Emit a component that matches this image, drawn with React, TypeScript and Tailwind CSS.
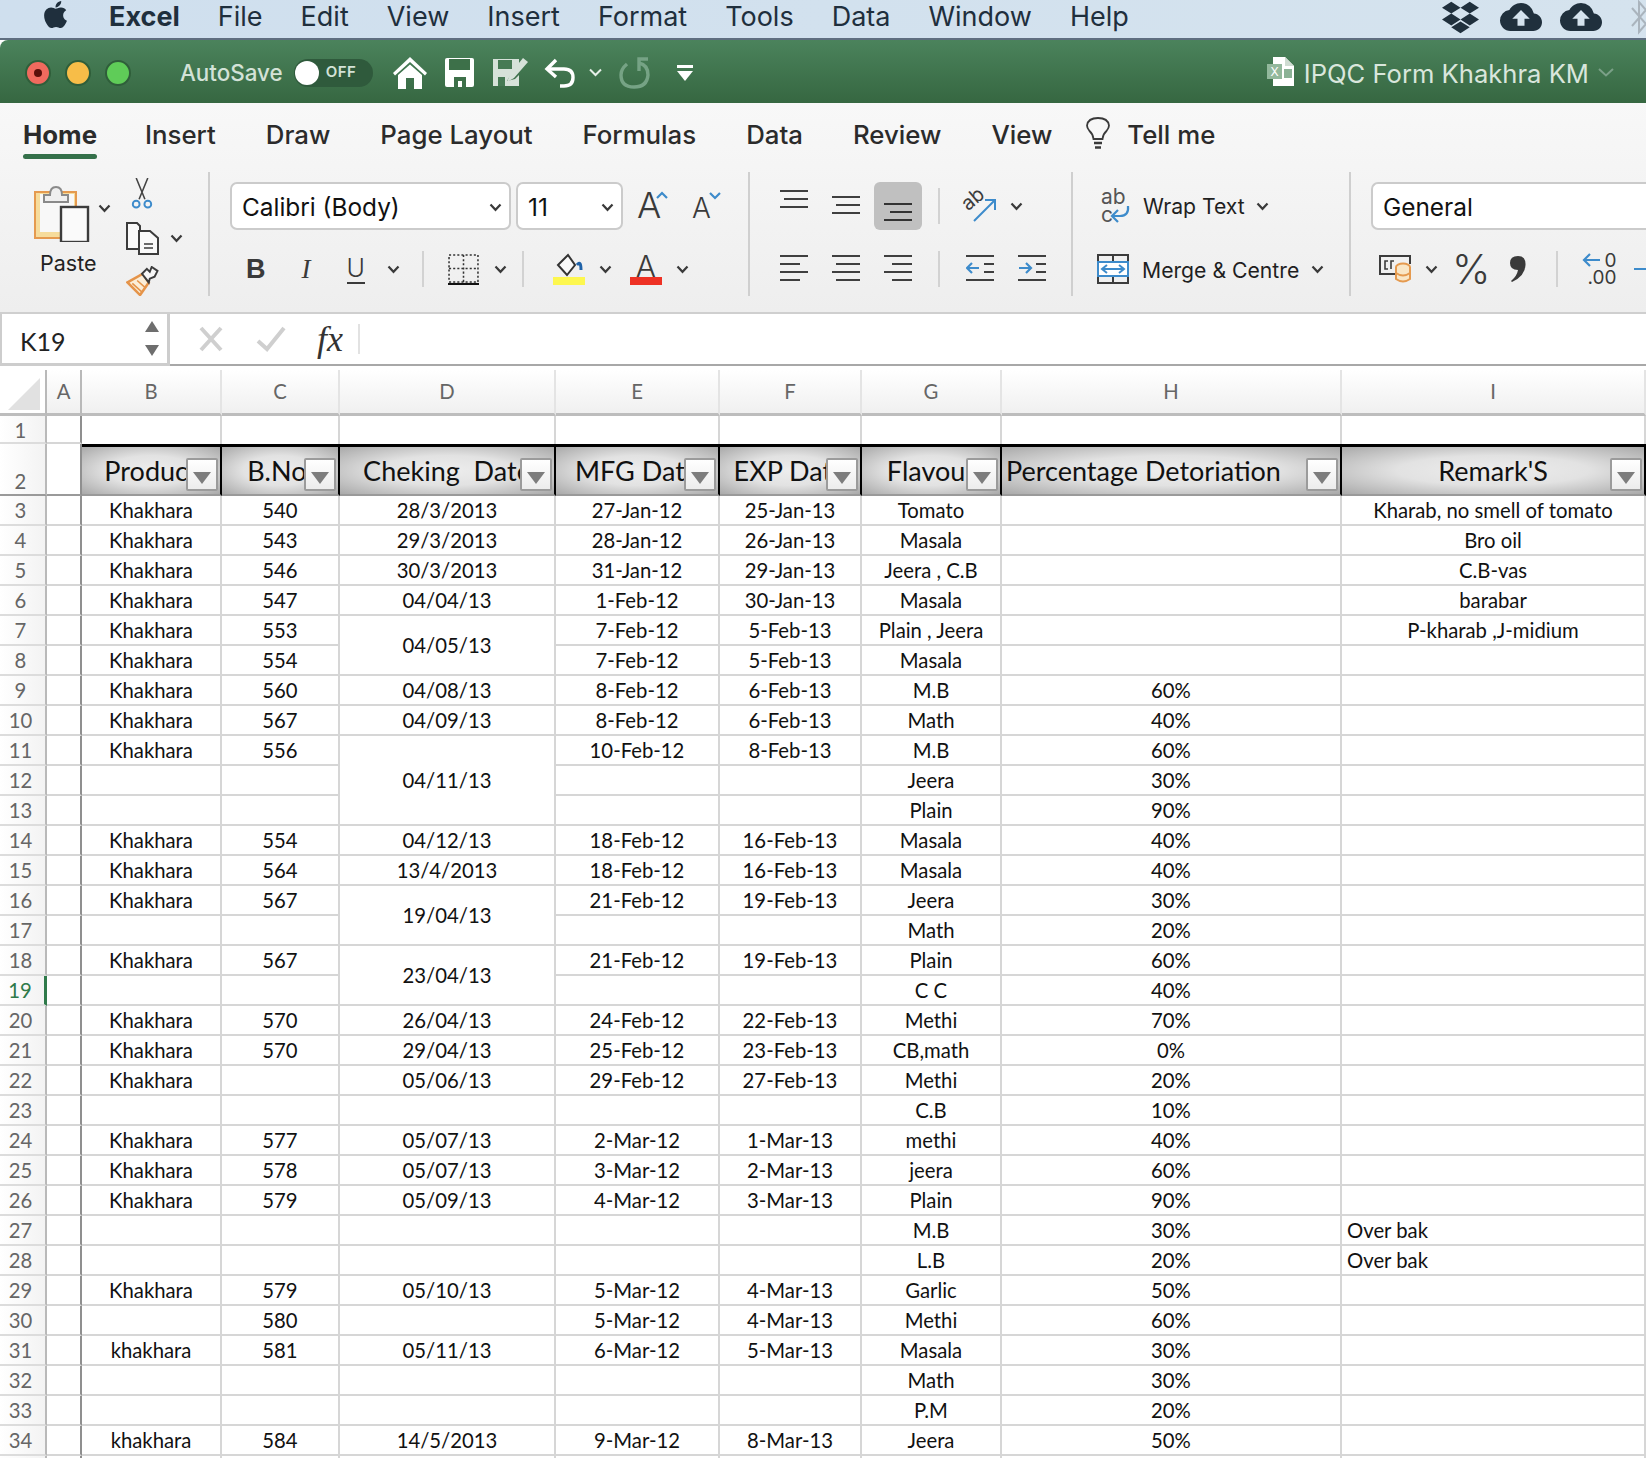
import { FaApple, FaDropbox } from "react-icons/fa";
import { MdCloudUpload } from "react-icons/md";

type Row = [number, string, string, string | null, string, string, string, string, string];

const rows: Row[] = [
  [3, "Khakhara", "540", "28/3/2013", "27-Jan-12", "25-Jan-13", "Tomato", "", "Kharab, no smell of tomato"],
  [4, "Khakhara", "543", "29/3/2013", "28-Jan-12", "26-Jan-13", "Masala", "", "Bro oil"],
  [5, "Khakhara", "546", "30/3/2013", "31-Jan-12", "29-Jan-13", "Jeera , C.B", "", "C.B-vas"],
  [6, "Khakhara", "547", "04/04/13", "1-Feb-12", "30-Jan-13", "Masala", "", "barabar"],
  [7, "Khakhara", "553", "04/05/13", "7-Feb-12", "5-Feb-13", "Plain , Jeera", "", "P-kharab ,J-midium"],
  [8, "Khakhara", "554", null, "7-Feb-12", "5-Feb-13", "Masala", "", ""],
  [9, "Khakhara", "560", "04/08/13", "8-Feb-12", "6-Feb-13", "M.B", "60%", ""],
  [10, "Khakhara", "567", "04/09/13", "8-Feb-12", "6-Feb-13", "Math", "40%", ""],
  [11, "Khakhara", "556", "04/11/13", "10-Feb-12", "8-Feb-13", "M.B", "60%", ""],
  [12, "", "", null, "", "", "Jeera", "30%", ""],
  [13, "", "", null, "", "", "Plain", "90%", ""],
  [14, "Khakhara", "554", "04/12/13", "18-Feb-12", "16-Feb-13", "Masala", "40%", ""],
  [15, "Khakhara", "564", "13/4/2013", "18-Feb-12", "16-Feb-13", "Masala", "40%", ""],
  [16, "Khakhara", "567", "19/04/13", "21-Feb-12", "19-Feb-13", "Jeera", "30%", ""],
  [17, "", "", null, "", "", "Math", "20%", ""],
  [18, "Khakhara", "567", "23/04/13", "21-Feb-12", "19-Feb-13", "Plain", "60%", ""],
  [19, "", "", null, "", "", "C C", "40%", ""],
  [20, "Khakhara", "570", "26/04/13", "24-Feb-12", "22-Feb-13", "Methi", "70%", ""],
  [21, "Khakhara", "570", "29/04/13", "25-Feb-12", "23-Feb-13", "CB,math", "0%", ""],
  [22, "Khakhara", "", "05/06/13", "29-Feb-12", "27-Feb-13", "Methi", "20%", ""],
  [23, "", "", "", "", "", "C.B", "10%", ""],
  [24, "Khakhara", "577", "05/07/13", "2-Mar-12", "1-Mar-13", "methi", "40%", ""],
  [25, "Khakhara", "578", "05/07/13", "3-Mar-12", "2-Mar-13", "jeera", "60%", ""],
  [26, "Khakhara", "579", "05/09/13", "4-Mar-12", "3-Mar-13", "Plain", "90%", ""],
  [27, "", "", "", "", "", "M.B", "30%", "Over bak"],
  [28, "", "", "", "", "", "L.B", "20%", "Over bak"],
  [29, "Khakhara", "579", "05/10/13", "5-Mar-12", "4-Mar-13", "Garlic", "50%", ""],
  [30, "", "580", "", "5-Mar-12", "4-Mar-13", "Methi", "60%", ""],
  [31, "khakhara", "581", "05/11/13", "6-Mar-12", "5-Mar-13", "Masala", "30%", ""],
  [32, "", "", "", "", "", "Math", "30%", ""],
  [33, "", "", "", "", "", "P.M", "20%", ""],
  [34, "khakhara", "584", "14/5/2013", "9-Mar-12", "8-Mar-13", "Jeera", "50%", ""],
];

const dateSpans: Record<number, number> = { 7: 2, 11: 3, 16: 2, 18: 2 };
const menus = ["File", "Edit", "View", "Insert", "Format", "Tools", "Data", "Window", "Help"];
const tabs = ["Insert", "Draw", "Page Layout", "Formulas", "Data", "Review", "View"];
const letters = ["B", "C", "D", "E", "F", "G", "H", "I"];
const headers = [
  { label: "Product" },
  { label: "B.No." },
  { label: "Cheking  Date" },
  { label: "MFG Date" },
  { label: "EXP Date" },
  { label: "Flavour" },
  { label: "Percentage Detoriation", left: true },
  { label: "Remark'S" },
];

function Chev({ className = "" }: { className?: string }) {
  return (
    <svg className={`shrink-0 ${className}`} width="13" height="9" viewBox="0 0 13 9" fill="none" stroke="#3a3a3a" strokeWidth="2.2">
      <path d="M1.5 1.5 6.5 6.8 11.5 1.5" />
    </svg>
  );
}

function Lines({ rows: ys, active = false }: { rows: [number, number][]; active?: boolean }) {
  return (
    <svg width="28" height="30" viewBox="0 0 28 30" stroke={active ? "#333" : "#3f3f3f"} strokeWidth="2" className="shrink-0">
      {ys.map(([y, x], i) => (
        <path key={i} d={`M${x < 0 ? 0 : x} ${y}H${x < 0 ? 28 + x : 28}`} />
      ))}
    </svg>
  );
}

function Divider({ className = "" }: { className?: string }) {
  return <div className={`h-9 w-0.5 shrink-0 bg-[#d2d2d2] ${className}`} />;
}

function FilterButton() {
  return (
    <div className="absolute right-[2px] bottom-[3px] flex h-[33px] w-[32px] items-center justify-center rounded-[2px] border-2 border-[#9b9b9b] bg-gradient-to-b from-white to-[#ececec]">
      <svg width="18" height="12" viewBox="0 0 18 12" className="mt-[6px]">
        <path d="M0 0H18L9 12Z" fill="#7d7d7d" />
      </svg>
    </div>
  );
}

function MenuBar() {
  return (
    <div className="flex h-[38px] items-center overflow-hidden bg-gradient-to-r from-[#cfdfee] to-[#d5e3ee] pb-[4px] font-['Inter',sans-serif] text-[27px] text-[#1f2f3d]">
      <FaApple className="ml-[40px] mb-[6px] shrink-0 text-[#1f2f3d]" size={31} />
      <span className="ml-[38px] font-bold">Excel</span>
      <div className="ml-[38px] flex gap-[38px]">
        {menus.map((m) => (
          <span key={m}>{m}</span>
        ))}
      </div>
      <div className="ml-auto flex items-center">
        <FaDropbox className="mr-[21px] text-[#20303d]" size={37} />
        <MdCloudUpload className="mr-[18px] text-[#20303d]" size={42} />
        <MdCloudUpload className="mr-[28px] text-[#20303d]" size={42} />
        <svg width="18" height="36" viewBox="0 0 18 36" fill="none" stroke="#aab4bd" strokeWidth="2" className="mr-[-2px] shrink-0">
          <path d="M2 9 16 25 9 33V3L16 11 2 27" />
        </svg>
      </div>
    </div>
  );
}

function TitleBar() {
  return (
    <div className="flex h-[63px] items-center rounded-tl-[8px] bg-gradient-to-b from-[#4b835c] to-[#366741] pt-[2px] font-['Inter',sans-serif]">
      <div className="ml-[25px] flex gap-[14px]">
        <div className="flex h-[26px] w-[26px] items-center justify-center rounded-full border-2 border-[#2f5e3a] bg-[#f06a5e]">
          <div className="h-[8px] w-[8px] rounded-full bg-[#5a0f0a]" />
        </div>
        <div className="h-[26px] w-[26px] rounded-full border-2 border-[#2f5e3a] bg-[#f7bd48]" />
        <div className="h-[26px] w-[26px] rounded-full border-2 border-[#2f5e3a] bg-[#5fcc58]" />
      </div>
      <span className="ml-[49px] text-[22.4px] font-medium text-[#d3e2d7]">AutoSave</span>
      <div className="ml-[11px] flex h-[28px] w-[79px] items-center rounded-full bg-[#2f5a3c] pl-[1px]">
        <div className="h-[24px] w-[24px] rounded-full bg-white" />
        <span className="ml-[7px] text-[15px] font-semibold tracking-[0.5px] text-[#d3e2d7]">OFF</span>
      </div>
      <svg className="ml-[20px] shrink-0" width="34" height="32" viewBox="0 0 34 32" fill="#fff">
        <path d="M17 0 34 16 32 18.500 17 5 2 18.500 0 16Z" />
        <path d="M5 18 17 7.500 29 18V32H21V21H13V32H5Z" />
      </svg>
      <svg className="ml-[18px] shrink-0" width="29" height="29" viewBox="0 0 29 29">
        <path d="M2 0H27Q29 0 29 2V27Q29 29 27 29H2Q0 29 0 27V2Q0 0 2 0Z" fill="#fff" />
        <rect x="4" y="1" width="21" height="11" fill="#3d7049" />
        <path d="M9 29V19H21V29H17V23H13V29Z" fill="#3d7049" />
      </svg>
      <svg className="ml-[17px] shrink-0" width="38" height="31" viewBox="0 0 38 31">
        <path d="M2 2H28V8L20 17 16 24 24 22 28 18V29H2Z" fill="#d6e2d9" />
        <rect x="7" y="3" width="14" height="9" fill="#467a54" />
        <path d="M32 1 37 5 23 21 16 25 19 17Z" fill="#d6e2d9" />
        <path d="M7 20H14V29H7Z" fill="#467a54" />
      </svg>
      <svg className="ml-[15px] shrink-0" width="32" height="30" viewBox="0 0 32 30" fill="none" stroke="#fff" strokeWidth="3.4">
        <path d="M12 2 3 11 12 19" />
        <path d="M3 11H20Q29 11 29 19.500T20 28H16" />
      </svg>
      <svg className="ml-[13px] shrink-0" width="13" height="9" viewBox="0 0 13 9" fill="none" stroke="#e5efe8" strokeWidth="2">
        <path d="M1 1.500 6.500 7 12 1.500" />
      </svg>
      <svg className="ml-[17px] shrink-0" width="31" height="32" viewBox="0 0 31 32" fill="none" stroke="#76a385" strokeWidth="3.4">
        <path d="M8 7Q2 12 2 18 2 30 15 30T29 18Q29 8 20 6" />
        <path d="M20 14V2L29 2" />
      </svg>
      <svg className="ml-[27px] shrink-0" width="16" height="16" viewBox="0 0 16 16" fill="#fff">
        <rect y="0" width="16" height="3" />
        <path d="M0 6H16L8 16Z" />
      </svg>
      <div className="ml-auto flex items-center">
        <svg className="mr-[9px] shrink-0" width="28" height="30" viewBox="0 0 28 30">
          <path d="M6 0H18L27 9V29H6Z" fill="#fff" />
          <path d="M18 0V9H27Z" fill="#cfdcd2" />
          <rect x="0" y="7" width="15" height="15" fill="#92b89c" />
          <rect x="17" y="12" width="8" height="9" fill="#8bb296" />
          <text x="3.500" y="19" fontSize="12" fill="#fff" fontFamily="Inter">X</text>
        </svg>
        <span className="pt-[3px] text-[25.6px] text-[#d9e6dc]">IPQC Form Khakhra KM</span>
        <svg className="ml-[9px] mr-[32px] shrink-0" width="16" height="9" viewBox="0 0 16 9" fill="none" stroke="#7ba088" strokeWidth="2">
          <path d="M1 1 8 7.500 15 1" />
        </svg>
      </div>
    </div>
  );
}

function Tabs() {
  return (
    <div className="flex h-[57px] items-start pl-[23px] pt-[15px] font-['Inter',sans-serif] text-[25.8px] font-medium leading-[34px] text-[#2b2b2b]">
      <div className="relative font-bold">
        Home
        <div className="absolute left-0 right-0 top-[36px] h-[5px] rounded-full bg-[#34704a]" />
      </div>
      <div className="ml-[48px] flex gap-[50px]">
        {tabs.map((t) => (
          <span key={t}>{t}</span>
        ))}
      </div>
      <svg className="ml-[34px] -mt-[1px] shrink-0" width="24" height="33" viewBox="0 0 24 33" fill="none" stroke="#3a3a3a" strokeWidth="1.8">
        <path d="M7.500 22Q7 17 3.500 14 1 11 1 8.500 2 1 12 1T23 8.500Q23 11 20.500 14 17 17 16.500 22Z" />
        <path d="M8 26H16M9 30.500H15" strokeWidth="2.400" />
      </svg>
      <span className="ml-[17px]">Tell me</span>
    </div>
  );
}

function ClipboardGroup() {
  return (
    <div className="flex h-[124px] w-[210px] shrink-0 border-r-2 border-[#cfcfcf]">
      <div className="ml-[34px] flex w-[64px] flex-col items-start pt-[10px]">
        <svg width="56" height="60" viewBox="0 0 56 60" className="shrink-0">
          <rect x="1" y="10" width="41" height="46" fill="#f6dc9c" stroke="#e59a4f" strokeWidth="2" />
          <rect x="6" y="12" width="34" height="38" fill="#f8f8f8" />
          <path d="M10 20V13H16Q16 5 22 5T28 13H34V20Z" fill="#efefef" stroke="#8a8a8a" strokeWidth="2" />
          <rect x="27" y="25" width="27" height="35" fill="#fafafa" stroke="#3c3c3c" strokeWidth="2.400" />
        </svg>
        <span className="ml-[6px] mt-[9px] font-['Inter',sans-serif] text-[21.5px] leading-[24px] text-[#222]">Paste</span>
      </div>
      <Chev className="ml-[0px] mt-[32px]" />
      <div className="ml-[15px] flex flex-col pt-[6px]">
        <svg width="22" height="33" viewBox="0 0 22 33" fill="none" stroke="#444" strokeWidth="1.600" className="ml-[5px]">
          <path d="M5 0 14 22M17 0 8 22" />
          <circle cx="5" cy="27" r="3.500" stroke="#3d8bcb" strokeWidth="2" />
          <circle cx="17" cy="27" r="3.500" stroke="#3d8bcb" strokeWidth="2" />
        </svg>
        <div className="mt-[12px] flex items-center">
          <svg width="33" height="33" viewBox="0 0 33 33" fill="#fafafa" stroke="#3c3c3c" strokeWidth="2">
            <path d="M14 27H1V1H11L14 4V9" />
            <path d="M13 9H24L32 16V32H13Z" />
            <path d="M18 22H27M18 26H27" strokeWidth="1.500" />
          </svg>
          <Chev className="ml-[11px]" />
        </div>
        <svg width="33" height="31" viewBox="0 0 33 31" className="mt-[11px]">
          <path d="M1 17 17 8 23 17 14 30Z" fill="#fbeed8" stroke="#e5944a" strokeWidth="2.600" />
          <path d="M6 18 16 27M11 15 19 22" stroke="#e5944a" strokeWidth="1.600" />
          <path d="M16 8 21 3 24 6 26 1 32 5 29 11 24 13 23 17Z" fill="#f7f7f7" stroke="#3c3c3c" strokeWidth="2" />
        </svg>
      </div>
    </div>
  );
}

function FontGroup() {
  return (
    <div className="flex h-[124px] w-[540px] shrink-0 flex-col border-r-2 border-[#cfcfcf] pt-[10px] font-['Inter',sans-serif]">
      <div className="ml-[20px] flex h-[48px] items-center">
        <div className="flex h-[48px] w-[281px] items-center justify-between rounded-[7px] border-2 border-[#cbcbcb] bg-white pl-[10px] pr-[7px] pt-[3px] text-[24.4px] text-[#111]">
          Calibri (Body)
          <Chev />
        </div>
        <div className="ml-[5px] flex h-[48px] w-[107px] items-center justify-between rounded-[7px] border-2 border-[#cbcbcb] bg-white pl-[10px] pr-[7px] pt-[3px] text-[24.4px] text-[#111]">
          11
          <Chev />
        </div>
        <svg width="32" height="46" viewBox="0 0 32 46" className="ml-[14px] shrink-0">
          <text x="0" y="35" fontSize="36" fontFamily="Inter" fontWeight="300" fill="#3a3a3a">A</text>
          <path d="M20 15 25 10 30 15" fill="none" stroke="#3d8bcb" strokeWidth="2.200" />
        </svg>
        <svg width="30" height="46" viewBox="0 0 30 46" className="ml-[23px] shrink-0">
          <text x="0" y="35" fontSize="28" fontFamily="Inter" fontWeight="300" fill="#3a3a3a">A</text>
          <path d="M18 10 23 15 28 10" fill="none" stroke="#3d8bcb" strokeWidth="2.200" />
        </svg>
      </div>
      <div className="mt-[19px] flex h-[40px] items-center text-[#3a3a3a]">
        <span className="ml-[36px] font-['Liberation_Sans',sans-serif] text-[27px] font-bold">B</span>
        <span className="ml-[36px] font-['Liberation_Serif',serif] text-[27px] italic">I</span>
        <span className="ml-[36px] border-b-2 border-[#3a3a3a] text-[25px] font-light leading-[28px]">U</span>
        <Chev className="ml-[22px]" />
        <Divider className="ml-[22px]" />
        <svg width="31" height="31" viewBox="0 0 30 30" fill="none" stroke="#333" strokeWidth="1.500" strokeDasharray="2 2" className="ml-[24px] shrink-0">
          <rect x="1" y="1" width="28" height="26" />
          <path d="M15 1V27M1 14H29" />
          <path d="M0 29H30" stroke="#111" strokeWidth="2" strokeDasharray="none" />
        </svg>
        <Chev className="ml-[15px]" />
        <Divider className="ml-[15px]" />
        <div className="ml-[29px] flex w-[32px] shrink-0 flex-col">
          <svg width="32" height="24" viewBox="0 0 32 24" fill="none">
            <path d="M5 12 15 2 22 12 14 22Z" fill="#fafafa" stroke="#333" strokeWidth="2" />
            <path d="M24 12Q28 7 28 17" stroke="#1f62a8" strokeWidth="3" />
          </svg>
          <div className="h-[8px] w-[32px] bg-[#fdf74f]" />
        </div>
        <Chev className="ml-[14px]" />
        <div className="ml-[18px] flex w-[32px] shrink-0 flex-col items-center">
          <span className="h-[24px] text-[30px] font-light leading-[26px]">A</span>
          <div className="h-[8px] w-[32px] bg-[#ee3124]" />
        </div>
        <Chev className="ml-[14px]" />
      </div>
    </div>
  );
}

function AlignGroup() {
  return (
    <div className="flex h-[124px] w-[323px] shrink-0 flex-col border-r-2 border-[#cfcfcf] pt-[10px]">
      <div className="flex h-[48px] items-center">
        <div className="ml-[30px] mb-[16px]">
          <Lines rows={[[8, 0], [16, 4], [24, 0]]} />
        </div>
        <div className="ml-[24px] mb-[4px]">
          <Lines rows={[[8, 0], [16, 4], [24, 0]]} />
        </div>
        <div className="ml-[14px] flex h-[48px] w-[48px] items-start justify-center rounded-[6px] bg-[#c0c0c0] pt-[14px]">
          <Lines active rows={[[8, 0], [16, 6], [24, 0]]} />
        </div>
        <Divider className="ml-[16px]" />
        <svg width="56" height="56" viewBox="-11 -12 56 56" className="my-[-4px] ml-[12px] mr-[-11px] shrink-0">
          <text x="0" y="16" fontSize="20" fontFamily="Inter" fill="#3c3c3c" transform="rotate(-40 10 12)">ab</text>
          <path d="M11 31 31 11M22 10H32V20" fill="none" stroke="#3d8bcb" strokeWidth="2" />
        </svg>
        <Chev className="ml-[13px]" />
      </div>
      <div className="mt-[19px] flex h-[40px] items-center">
        <div className="ml-[30px]">
          <Lines rows={[[2, 0], [10, -8], [18, 0], [26, -8]]} />
        </div>
        <div className="ml-[24px]">
          <Lines rows={[[2, 0], [10, 4], [18, 0], [26, 4]]} />
        </div>
        <div className="ml-[24px]">
          <Lines rows={[[2, 0], [10, 8], [18, 0], [26, 8]]} />
        </div>
        <Divider className="ml-[26px]" />
        <svg width="28" height="30" viewBox="0 0 28 30" fill="none" className="ml-[26px] shrink-0">
          <path d="M0 2H28M18 10H28M18 18H28M0 26H28" stroke="#3f3f3f" strokeWidth="2" />
          <path d="M1 14H13M6 9 1 14 6 19" stroke="#3d8bcb" strokeWidth="2.200" />
        </svg>
        <svg width="28" height="30" viewBox="0 0 28 30" fill="none" className="ml-[24px] shrink-0">
          <path d="M0 2H28M18 10H28M18 18H28M0 26H28" stroke="#3f3f3f" strokeWidth="2" />
          <path d="M1 14H13M8 9 13 14 8 19" stroke="#3d8bcb" strokeWidth="2.200" />
        </svg>
      </div>
    </div>
  );
}

function WrapGroup() {
  return (
    <div className="flex h-[124px] w-[278px] shrink-0 flex-col border-r-2 border-[#cfcfcf] pt-[10px] font-['Inter',sans-serif] text-[21.2px] text-[#1f1f1f]">
      <div className="flex h-[48px] items-center">
        <svg width="30" height="46" viewBox="0 -6 30 46" className="ml-[28px] shrink-0">
          <text x="0" y="15" fontSize="21" fontFamily="Inter" fill="#555">ab</text>
          <text x="0" y="33" fontSize="21" fontFamily="Inter" fill="#555">c</text>
          <path d="M27 17Q28 27 19 27H12M17 21 11 27 17 33" fill="none" stroke="#3d8bcb" strokeWidth="2.200" />
        </svg>
        <span className="ml-[12px] pt-[2px]">Wrap Text</span>
        <Chev className="ml-[11px]" />
      </div>
      <div className="mt-[19px] flex h-[40px] items-center">
        <svg width="32" height="30" viewBox="0 0 32 30" fill="none" className="ml-[24px] shrink-0">
          <rect x="1" y="1" width="30" height="28" stroke="#3c3c3c" strokeWidth="2" />
          <path d="M16 1V8M16 22V29" stroke="#3c3c3c" strokeWidth="2" />
          <rect x="1" y="8" width="30" height="14" stroke="#3d8bcb" strokeWidth="2" fill="#fff" />
          <path d="M5 15H27M10 11 5 15 10 19M22 11 27 15 22 19" stroke="#3d8bcb" strokeWidth="2" />
        </svg>
        <span className="ml-[13px] pt-[3px]">Merge &amp; Centre</span>
        <Chev className="ml-[12px]" />
      </div>
    </div>
  );
}

function NumberGroup() {
  return (
    <div className="flex h-[124px] flex-1 flex-col overflow-hidden pt-[10px] font-['Inter',sans-serif] text-[#3a3a3a]">
      <div className="ml-[20px] flex h-[48px] w-[300px] items-center rounded-l-[7px] border-2 border-r-0 border-[#cbcbcb] bg-white pl-[10px] pt-[3px] text-[24.4px] text-[#111]">
        General
      </div>
      <div className="mt-[19px] flex h-[40px] items-center">
        <svg width="33" height="28" viewBox="0 0 33 28" fill="none" className="ml-[28px] shrink-0">
          <path d="M16 19H1V1H31V9" stroke="#3c3c3c" strokeWidth="2" />
          <path d="M9 6H6V14H9M15 6H12V14" stroke="#3c3c3c" strokeWidth="1.600" />
          <ellipse cx="24" cy="12" rx="7" ry="3.500" fill="#f9e6c6" stroke="#e59a4f" strokeWidth="2" />
          <path d="M17 12V24Q24 29 31 24V12M17 18Q24 23 31 18" fill="#f9e6c6" stroke="#e59a4f" strokeWidth="2" />
        </svg>
        <Chev className="ml-[13px]" />
        <span className="ml-[14px] text-[41px] font-light leading-none">%</span>
        <svg width="16" height="28" viewBox="0 0 16 28" className="ml-[20px] shrink-0">
          <path d="M8 1Q16 1 15.500 10 15 21 2 27L1 26Q7 21 8 15 0 15 0 8 0 1 8 1Z" fill="#3a3a3a" />
        </svg>
        <Divider className="ml-[30px]" />
        <div className="relative ml-[24px] h-[34px] w-[34px] shrink-0 text-[19px] leading-[17px]">
          <svg width="20" height="16" viewBox="0 0 20 16" fill="none" stroke="#3d8bcb" strokeWidth="2.200" className="absolute left-0 top-0">
            <path d="M18 8H2M8 2 2 8 8 14" />
          </svg>
          <span className="absolute right-0 top-0">0</span>
          <span className="absolute right-0 top-[17px]">.00</span>
        </div>
        <div className="ml-[18px] h-[2px] w-[12px] shrink-0 bg-[#3d8bcb]" />
      </div>
    </div>
  );
}

function FormulaBar() {
  return (
    <div className="flex h-[58px] border-t-2 border-[#cfcfcf] bg-white">
      <div className="flex h-[52px] w-[170px] shrink-0 items-center justify-between border-r-[3px] border-b-[3px] border-l-2 border-[#cdcdcd] pl-[18px] pr-[7px] pt-[6px] font-['Lato',sans-serif] text-[25px] text-[#222]">
        K19
        <svg width="16" height="36" viewBox="0 0 16 36" fill="#6e6e6e" className="-mt-[6px]">
          <path d="M8 0 15 11H1Z" />
          <path d="M1 24H15L8 35Z" />
        </svg>
      </div>
      <div className="flex h-[52px] flex-1 items-center border-b-2 border-[#a8a8a8]">
        <svg width="24" height="26" viewBox="0 0 24 26" fill="none" stroke="#cfcfcf" strokeWidth="4" className="ml-[29px]">
          <path d="M2 2 22 24M22 2 2 24" />
        </svg>
        <svg width="30" height="26" viewBox="0 0 30 26" fill="none" stroke="#cfcfcf" strokeWidth="4" className="ml-[33px]">
          <path d="M2 15 11 23 28 2" />
        </svg>
        <span className="ml-[31px] font-['Liberation_Serif',serif] text-[36px] italic leading-none text-[#333]">fx</span>
        <div className="ml-[15px] h-[30px] w-0.5 bg-[#e2e2e2]" />
      </div>
    </div>
  );
}

function Sheet() {
  const cell = "border-r-2 border-b-2 border-[#d6d6d6] p-0 text-center align-middle";
  const rowHead = "border-r-2 border-b-2 border-r-[#b9b9b9] border-b-[#dcdcdc] bg-gradient-to-r from-white to-[#f3f3f3] p-0 pr-[4px] text-center align-middle text-[#666]";
  const colA = "border-r-2 border-b-2 border-r-[#8f8f8f] border-b-[#d6d6d6] p-0";
  return (
    <table className="w-[1646px] table-fixed border-separate border-spacing-0 font-['Lato',sans-serif] text-[20.3px] leading-none text-[#111]">
      <colgroup>
        <col className="w-[47px]" />
        <col className="w-[35px]" />
        <col className="w-[140px]" />
        <col className="w-[118px]" />
        <col className="w-[216px]" />
        <col className="w-[164px]" />
        <col className="w-[142px]" />
        <col className="w-[140px]" />
        <col className="w-[340px]" />
        <col className="w-[304px]" />
      </colgroup>
      <thead>
        <tr className="h-[46px]">
          <th className="relative border-r-2 border-b-[3px] border-r-[#b9b9b9] border-b-[#bdbdbd] bg-white p-0">
            <svg width="32" height="32" viewBox="0 0 32 32" className="absolute left-[8px] top-[8px]">
              <path d="M32 0V32H0Z" fill="#e1e1e1" />
            </svg>
          </th>
          <th className="border-r-2 border-b-[3px] border-r-[#b9b9b9] border-b-[#bdbdbd] bg-gradient-to-b from-white to-[#f0f0f0] p-0 font-normal text-[#666]">A</th>
          {letters.map((l) => (
            <th key={l} className="border-r-2 border-b-[3px] border-r-[#e4e4e4] border-b-[#bdbdbd] bg-gradient-to-b from-white to-[#f0f0f0] p-0 font-normal text-[#666]">
              {l}
            </th>
          ))}
        </tr>
      </thead>
      <tbody>
        <tr className="h-[28px]">
          <td className={`${rowHead} pt-[2px]`}>1</td>
          <td className={colA} />
          {letters.map((l) => (
            <td key={l} className="border-r-2 border-[#d6d6d6] p-0" />
          ))}
        </tr>
        <tr className="h-[52px]">
          <td className="border-r-2 border-b-2 border-r-[#b9b9b9] border-b-[#9a9a9a] bg-gradient-to-r from-white to-[#f3f3f3] p-0 pr-[4px] pb-[3px] text-center align-bottom text-[#666]">2</td>
          <td className="border-r-2 border-b-2 border-r-[#8f8f8f] border-b-[#9a9a9a] p-0" />
          {headers.map((h) => (
            <td
              key={h.label}
              className={`relative overflow-hidden whitespace-pre border-t-[3px] border-r-2 border-b-2 border-t-black border-r-black border-b-[#9a9a9a] bg-[radial-gradient(ellipse_at_center,#ededed_0%,#e2e2e2_45%,#a9a9a9_100%)] p-0 pb-[1px] align-middle text-[27px] text-[#111] ${h.left ? "pl-[4px] text-left" : "text-center"}`}
            >
              {h.label}
              <FilterButton />
            </td>
          ))}
        </tr>
        {rows.map((r) => (
          <tr key={r[0]} className="h-[30px]">
            <td className={r[0] === 19 ? "border-r-[3px] border-b-2 border-r-[#2f7a4a] border-b-[#dcdcdc] bg-gradient-to-r from-white to-[#f3f3f3] p-0 pr-[4px] text-center align-middle text-[#2f7a4a]" : rowHead}>{r[0]}</td>
            <td className={colA} />
            <td className={cell}>{r[1]}</td>
            <td className={cell}>{r[2]}</td>
            {r[3] !== null && (
              <td className={cell} rowSpan={dateSpans[r[0]] ?? 1}>
                {r[3]}
              </td>
            )}
            <td className={cell}>{r[4]}</td>
            <td className={cell}>{r[5]}</td>
            <td className={cell}>{r[6]}</td>
            <td className={cell}>{r[7]}</td>
            <td className={r[8] === "Over bak" ? `${cell} pl-[5px] !text-left` : cell}>{r[8]}</td>
          </tr>
        ))}
        <tr className="h-[30px]">
          <td className={rowHead} />
          <td className={colA} />
          {letters.map((l) => (
            <td key={l} className={cell} />
          ))}
        </tr>
      </tbody>
    </table>
  );
}

export default function App() {
  return (
    <div className="h-[1458px] w-[1646px] overflow-hidden bg-white">
      <MenuBar />
      <div className="h-[2px] bg-[#5f6e80]" />
      <TitleBar />
      <div className="h-[209px] bg-gradient-to-b from-[#f8f8f8] to-[#eeeeee]">
        <Tabs />
        <div className="flex pt-[12px]">
          <ClipboardGroup />
          <FontGroup />
          <AlignGroup />
          <WrapGroup />
          <NumberGroup />
        </div>
      </div>
      <FormulaBar />
      <Sheet />
    </div>
  );
}
